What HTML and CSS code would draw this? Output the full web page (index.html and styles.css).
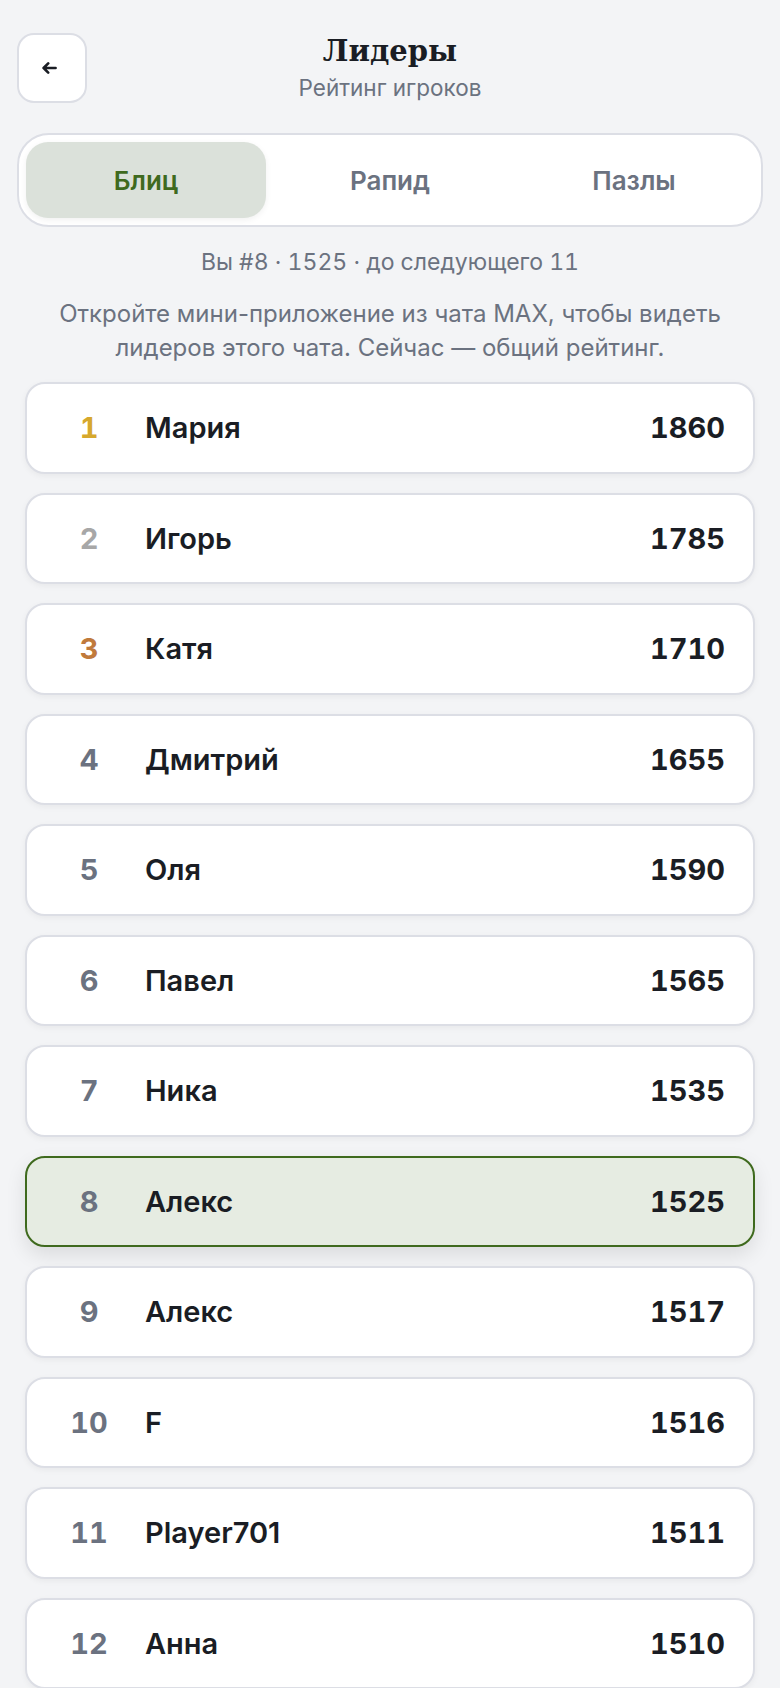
FILE: index.html
```html
<!DOCTYPE html>
<html lang="ru">
<head>
<meta charset="utf-8">
<title>Лидеры</title>
<link rel="stylesheet" href="styles.css">
</head>
<body>
<div class="page">
  <header class="header">
    <button class="back" aria-label="Назад">
      <svg class="back-icon" width="15" height="12" viewBox="0 0 15 12" fill="none" stroke="#1a1d24" stroke-width="2.6" stroke-linecap="round" stroke-linejoin="round"><path d="M13.6 6H1.6M6.2 1.4L1.6 6L6.2 10.6"/></svg>
    </button>
    <div class="titles">
      <h1 class="title">Лидеры</h1>
      <div class="subtitle">Рейтинг игроков</div>
    </div>
    <div class="spacer"></div>
  </header>

  <nav class="tabs">
    <div class="tab active">Блиц</div>
    <div class="tab">Рапид</div>
    <div class="tab">Пазлы</div>
  </nav>

  <p class="me">Вы #8 · 1525 · до следующего 11</p>
  <p class="note">Откройте мини-приложение из чата MAX, чтобы видеть лидеров этого чата. Сейчас — общий рейтинг.</p>

  <ul class="list">
    <li class="row"><span class="rank gold">1</span><span class="name">Мария</span><span class="score">1860</span></li>
    <li class="row"><span class="rank silver">2</span><span class="name">Игорь</span><span class="score">1785</span></li>
    <li class="row"><span class="rank bronze">3</span><span class="name">Катя</span><span class="score">1710</span></li>
    <li class="row"><span class="rank">4</span><span class="name">Дмитрий</span><span class="score">1655</span></li>
    <li class="row"><span class="rank">5</span><span class="name">Оля</span><span class="score">1590</span></li>
    <li class="row"><span class="rank">6</span><span class="name">Павел</span><span class="score">1565</span></li>
    <li class="row"><span class="rank">7</span><span class="name">Ника</span><span class="score">1535</span></li>
    <li class="row me-row"><span class="rank">8</span><span class="name">Алекс</span><span class="score">1525</span></li>
    <li class="row"><span class="rank">9</span><span class="name">Алекс</span><span class="score">1517</span></li>
    <li class="row"><span class="rank">10</span><span class="name">F</span><span class="score">1516</span></li>
    <li class="row"><span class="rank">11</span><span class="name">Player701</span><span class="score">1511</span></li>
    <li class="row"><span class="rank">12</span><span class="name">Анна</span><span class="score">1510</span></li>
  </ul>
</div>
</body>
</html>
```
FILE: styles.css
```css
* { box-sizing: border-box; }
html, body {
  margin: 0;
  padding: 0;
  background: #f3f4f6;
}
body {
  font-family: Inter, "Noto Sans", sans-serif;
  color: #1a1d24;
}
.page {
  padding: 33px 17px 40px;
}
.header {
  display: grid;
  grid-template-columns: 70px 1fr 70px;
  align-items: start;
  height: 70px;
}
.back {
  width: 70px;
  height: 70px;
  border: 2px solid #dcdee5;
  border-radius: 17px;
  background: #fff;
  display: flex;
  align-items: center;
  justify-content: center;
  padding: 0;
}
.back-icon {
  margin-right: 6px;
}
.titles {
  text-align: center;
  padding-top: 1px;
}
.title {
  margin: 0;
  font-family: "DejaVu Serif", serif;
  font-weight: 700;
  font-size: 29px;
  line-height: 35px;
  color: #1a1d24;
}
.subtitle {
  margin-top: 5px;
  font-size: 22.5px;
  line-height: 28px;
  color: #6b7280;
}
.tabs {
  margin-top: 30px;
  display: grid;
  grid-template-columns: repeat(3, 1fr);
  gap: 4px;
  padding: 7px;
  border: 2px solid #dcdee5;
  border-radius: 32px;
  background: #fff;
}
.tab {
  height: 76px;
  display: flex;
  align-items: center;
  justify-content: center;
  font-size: 26px;
  font-weight: 600;
  color: #6b7280;
  border-radius: 22px;
}
.tab.active {
  background: #dbe1da;
  color: #3f6a1e;
  box-shadow: 0 2px 6px rgba(0,0,0,0.06);
}
.me {
  margin: 21px 0 0;
  text-align: center;
  font-size: 23px;
  line-height: 28px;
  color: #6b7280;
  font-variant-numeric: tabular-nums;
}
.note {
  margin: 21px 0 0;
  text-align: center;
  font-size: 24px;
  line-height: 34px;
  color: #6b7280;
}
.list {
  list-style: none;
  margin: 17px 0 0;
  padding: 0 8px;
  display: flex;
  flex-direction: column;
  gap: 19px;
}
.row {
  height: 91.5px;
  display: flex;
  align-items: center;
  padding: 0 28px;
  background: #fff;
  border: 2px solid #dcdee5;
  border-radius: 20px;
  box-shadow: 0 2px 6px rgba(0,0,0,0.05);
}
.rank {
  width: 68px;
  text-align: center;
  font-size: 29px;
  font-weight: 700;
  color: #6b7280;
  font-variant-numeric: tabular-nums;
}
.rank.gold { color: #d6a82d; }
.rank.silver { color: #a7a7a7; }
.rank.bronze { color: #c07a3c; }
.name {
  flex: 1;
  margin-left: 22px;
  font-size: 29px;
  font-weight: 600;
  color: #1a1d24;
}
.score {
  font-size: 29px;
  font-weight: 700;
  color: #1a1d24;
  font-variant-numeric: tabular-nums;
}
.row.me-row {
  background: #e6ece2;
  border-color: #3f6a1e;
  box-shadow: 0 8px 20px rgba(0,0,0,0.1);
}
```
